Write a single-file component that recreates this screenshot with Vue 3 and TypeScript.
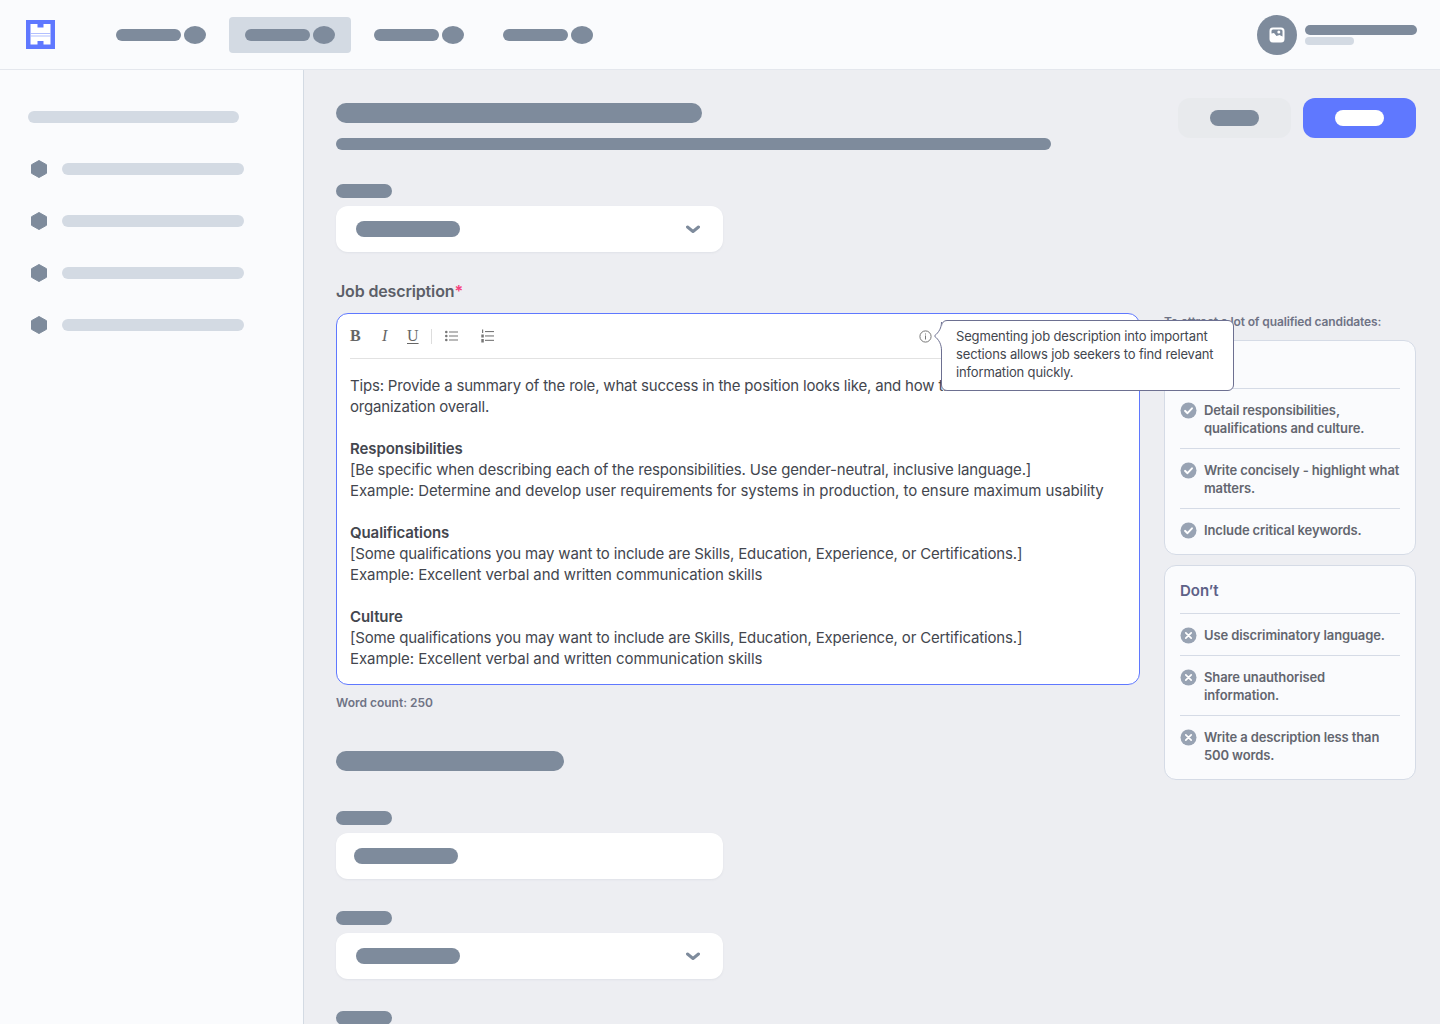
<script setup lang="ts">
const navItems = [false, true, false, false];
const sideItems = [1, 2, 3, 4];
const doItems = [
  ["Detail responsibilities,", "qualifications and culture."],
  ["Write concisely - highlight what", "matters."],
  ["Include critical keywords."],
];
const dontItems = [
  ["Use discriminatory language."],
  ["Share unauthorised", "information."],
  ["Write a description less than", "500 words."],
];
const sections = [
  {
    title: "Responsibilities",
    lines: [
      "[Be specific when describing each of the responsibilities. Use gender-neutral, inclusive language.]",
      "Example: Determine and develop user requirements for systems in production, to ensure maximum usability",
    ],
  },
  {
    title: "Qualifications",
    lines: [
      "[Some qualifications you may want to include are Skills, Education, Experience, or Certifications.]",
      "Example: Excellent verbal and written communication skills",
    ],
  },
  {
    title: "Culture",
    lines: [
      "[Some qualifications you may want to include are Skills, Education, Experience, or Certifications.]",
      "Example: Excellent verbal and written communication skills",
    ],
  },
];
</script>

<template>
  <div class="app">
    <header class="topbar">
      <svg class="logo" width="29" height="29" viewBox="0 0 29 29">
        <rect width="29" height="29" fill="#5f78ff" />
        <path d="M4.500 4h7v3.500h6V4h7v20.500h-7V21h-6v3.500h-7z" fill="#fff" />
        <rect x="4.500" y="13.200" width="20" height="0.800" fill="#9fb0ff" />
        <rect x="4.500" y="15.600" width="20" height="0.800" fill="#9fb0ff" />
      </svg>
      <nav class="nav">
        <div v-for="(active, i) in navItems" :key="i" class="nav-item" :class="{ active }">
          <span class="nav-pill"></span>
          <span class="nav-dot"></span>
        </div>
      </nav>
      <div class="user">
        <div class="avatar">
          <svg width="16" height="16" viewBox="0 0 16 16">
            <rect x="0.500" y="0.500" width="15" height="15" rx="3.500" fill="#fff" />
            <path d="M2.500 6.500V4A1.500 1.500 0 0 1 4 2.500h8A1.500 1.500 0 0 1 13.500 4v5.500l-3-1.500-3 1-2.500-3z" fill="#7e8b9c" />
            <circle cx="9.800" cy="5" r="1.500" fill="#fff" />
          </svg>
        </div>
        <div class="user-bars">
          <span class="user-name"></span>
          <span class="user-role"></span>
        </div>
      </div>
    </header>

    <div class="body">
      <aside class="sidebar">
        <span class="side-title"></span>
        <div v-for="n in sideItems" :key="n" class="side-item">
          <svg class="hex" width="16" height="18" viewBox="0 0 16 18">
            <path d="M8 .500 15.500 4.700v8.600L8 17.500.500 13.300V4.700z" fill="#7e8b9c" stroke="#7e8b9c" stroke-linejoin="round" />
          </svg>
          <span class="side-bar"></span>
        </div>
      </aside>

      <main class="main">
        <div class="page-head">
          <div class="head-bars">
            <span class="head-title"></span>
            <span class="head-sub"></span>
          </div>
          <div class="head-actions">
            <div class="btn btn-ghost"><span></span></div>
            <div class="btn btn-primary"><span></span></div>
          </div>
        </div>

        <div class="field first">
          <span class="label-bar"></span>
          <div class="select">
            <span class="value-bar"></span>
            <svg width="14" height="9" viewBox="0 0 14 9">
              <path d="M1.500 2 7 6.500 12.500 2" fill="none" stroke="#7e8b9c" stroke-width="3" stroke-linecap="round" stroke-linejoin="round" />
            </svg>
          </div>
        </div>

        <div class="form-row">
          <div class="form-col">
            <div class="job-label">Job description<span class="req">*</span></div>

            <div class="editor">
              <div class="toolbar">
                <span class="t-b">B</span>
                <span class="t-i">I</span>
                <span class="t-u">U</span>
                <span class="t-div"></span>
                <svg class="t-ul" width="13" height="12" viewBox="0 0 13 12">
                  <g fill="#777">
                    <circle cx="1.300" cy="2" r="1.300" />
                    <circle cx="1.300" cy="6" r="1.300" />
                    <circle cx="1.300" cy="10" r="1.300" />
                    <rect x="4" y="1.500" width="9" height="1" />
                    <rect x="4" y="5.500" width="9" height="1" />
                    <rect x="4" y="9.500" width="9" height="1" />
                  </g>
                </svg>
                <svg class="t-ol" width="13" height="14" viewBox="0 0 13 14">
                  <g fill="#777">
                    <rect x="1" y="0.500" width="1.200" height="3.500" />
                    <rect x="0.300" y="5.500" width="2.500" height="3" />
                    <rect x="0.300" y="10" width="2.500" height="3.500" />
                    <rect x="4" y="2" width="9" height="1.100" />
                    <rect x="4" y="6.400" width="9" height="1.100" />
                    <rect x="4" y="10.800" width="9" height="1.100" />
                  </g>
                </svg>
                <svg class="t-info" width="13" height="13" viewBox="0 0 13 13">
                  <circle cx="6.500" cy="6.500" r="5.600" fill="none" stroke="#777" stroke-width="1" />
                  <rect x="6" y="5.500" width="1" height="4" fill="#777" />
                  <rect x="6" y="3.500" width="1" height="1" fill="#777" />
                </svg>
              </div>
              <div class="editor-text">
                <p class="intro">Tips: Provide a summary of the role, what success in the position looks like, and how this role fits into the<br />organization overall.</p>
                <section v-for="s in sections" :key="s.title" class="ed-section">
                  <strong>{{ s.title }}</strong>
                  <div v-for="l in s.lines" :key="l" :class="{ bracket: l.startsWith('[') }">{{ l }}</div>
                </section>
              </div>

              <div class="tooltip">
                <svg class="tip-tail" width="9" height="32" viewBox="0 0 9 32">
                  <path d="M8.500 1C8.500 7 6 11 1.500 15 6 19 8.500 23 8.500 30L9 30V1z" fill="#fff" />
                  <path d="M8.500 1C8.500 7 6 11 1.500 15 6 19 8.500 23 8.500 30" fill="none" stroke="#6d7091" stroke-width="1" />
                </svg>
                Segmenting job description into important<br />sections allows job seekers to find relevant<br />information quickly.
              </div>
            </div>

            <div class="word-count">Word count: 250</div>
            <span class="section-bar"></span>

            <div class="field after-bar">
              <span class="label-bar"></span>
              <div class="select input">
                <span class="value-bar"></span>
              </div>
            </div>
            <div class="field">
              <span class="label-bar"></span>
              <div class="select">
                <span class="value-bar"></span>
                <svg width="14" height="9" viewBox="0 0 14 9">
                  <path d="M1.500 2 7 6.500 12.500 2" fill="none" stroke="#7e8b9c" stroke-width="3" stroke-linecap="round" stroke-linejoin="round" />
                </svg>
              </div>
            </div>
            <div class="field">
              <span class="label-bar"></span>
            </div>
          </div>

          <div class="guide">
            <div class="guide-title">To attract a lot of qualified candidates:</div>
            <div class="card">
              <div class="card-title">Do</div>
              <div v-for="item in doItems" :key="item[0]" class="card-row">
                <svg class="mark" width="17" height="17" viewBox="0 0 17 17">
                  <circle cx="8.500" cy="8.500" r="8" fill="#98a3b3" />
                  <path d="M5 8.800l2.500 2.400L12 6.300" fill="none" stroke="#fff" stroke-width="1.900" stroke-linecap="round" stroke-linejoin="round" />
                </svg>
                <div class="card-text"><div v-for="t in item" :key="t">{{ t }}</div></div>
              </div>
            </div>
            <div class="card">
              <div class="card-title">Don’t</div>
              <div v-for="item in dontItems" :key="item[0]" class="card-row">
                <svg class="mark" width="17" height="17" viewBox="0 0 17 17">
                  <circle cx="8.500" cy="8.500" r="8" fill="#98a3b3" />
                  <path d="M5.800 5.800l5.400 5.400M11.200 5.800l-5.400 5.400" fill="none" stroke="#fff" stroke-width="1.700" stroke-linecap="round" />
                </svg>
                <div class="card-text"><div v-for="t in item" :key="t">{{ t }}</div></div>
              </div>
            </div>
          </div>
        </div>
      </main>
    </div>
  </div>
</template>

<style scoped>
.app {
  height: 1024px;
  overflow: hidden;
  display: flex;
  flex-direction: column;
  font-family: Inter, "Liberation Sans", sans-serif;
  background: #edeef2;
}
span {
  display: block;
}
.topbar {
  height: 70px;
  box-sizing: border-box;
  flex: none;
  display: flex;
  align-items: center;
  padding: 0 23px 0 26px;
  background: #fafbfd;
  border-bottom: 1px solid #e4e7ed;
}
.logo {
  flex: none;
}
.nav {
  display: flex;
  gap: 7px;
  margin-left: 45px;
}
.nav-item {
  width: 122px;
  height: 36px;
  box-sizing: border-box;
  padding: 0 16px;
  display: flex;
  align-items: center;
  gap: 3px;
  border-radius: 4px;
}
.nav-item.active {
  background: #d3dae3;
}
.nav-pill {
  width: 65px;
  height: 12px;
  border-radius: 6px;
  background: #7e8b9c;
}
.nav-dot {
  width: 22px;
  height: 18px;
  border-radius: 50%;
  background: #7e8b9c;
}
.user {
  margin-left: auto;
  display: flex;
  align-items: center;
  gap: 8px;
}
.avatar {
  width: 40px;
  height: 40px;
  border-radius: 50%;
  background: #7e8b9c;
  display: flex;
  align-items: center;
  justify-content: center;
}
.user-bars {
  display: flex;
  flex-direction: column;
  gap: 2px;
}
.user-name {
  width: 112px;
  height: 10px;
  border-radius: 5px;
  background: #7e8b9c;
}
.user-role {
  width: 49px;
  height: 8px;
  border-radius: 4px;
  background: #d3dae3;
}
.body {
  flex: 1;
  display: flex;
  min-height: 0;
}
.sidebar {
  width: 304px;
  box-sizing: border-box;
  flex: none;
  background: #fafbfd;
  border-right: 1px solid #d3dae3;
  padding: 41px 0 0 28px;
}
.side-title {
  width: 211px;
  height: 12px;
  border-radius: 6px;
  background: #d3dae3;
  margin-bottom: 20px;
}
.side-item {
  display: flex;
  align-items: center;
  height: 52px;
  padding-left: 3px;
}
.hex {
  flex: none;
}
.side-bar {
  width: 182px;
  height: 12px;
  margin-left: 15px;
  border-radius: 6px;
  background: #d3dae3;
}
.main {
  flex: 1;
  min-width: 0;
  padding: 28px 24px 0 32px;
}
.page-head {
  display: flex;
  justify-content: space-between;
  align-items: flex-start;
}
.head-bars {
  padding-top: 5px;
  display: flex;
  flex-direction: column;
  gap: 15px;
}
.head-title {
  width: 366px;
  height: 20px;
  border-radius: 10px;
  background: #7e8b9c;
}
.head-sub {
  width: 715px;
  height: 12px;
  border-radius: 6px;
  background: #7e8b9c;
}
.head-actions {
  display: flex;
  gap: 12px;
}
.btn {
  width: 113px;
  height: 40px;
  border-radius: 12px;
  display: flex;
  align-items: center;
  justify-content: center;
}
.btn span {
  width: 49px;
  height: 16px;
  border-radius: 8px;
}
.btn-ghost {
  background: #e8eaed;
}
.btn-ghost span {
  background: #7e8b9c;
}
.btn-primary {
  background: #5f78ff;
}
.btn-primary span {
  background: #fff;
}
.field {
  margin-top: 32px;
}
.field.first {
  margin-top: 34px;
}
.field.after-bar {
  margin-top: 40px;
}
.label-bar {
  width: 56px;
  height: 14px;
  border-radius: 7px;
  background: #7e8b9c;
  margin-bottom: 8px;
}
.select {
  width: 387px;
  height: 46px;
  box-sizing: border-box;
  background: #fff;
  border-radius: 12px;
  padding: 0 23px 0 20px;
  display: flex;
  align-items: center;
  justify-content: space-between;
  box-shadow: 0 1px 2px rgba(130, 140, 160, 0.12);
}
.select.input {
  padding-left: 18px;
}
.value-bar {
  width: 104px;
  height: 16px;
  border-radius: 8px;
  background: #7e8b9c;
}
.form-row {
  display: flex;
  gap: 24px;
  align-items: flex-start;
}
.form-col {
  width: 804px;
  flex: none;
}
.job-label {
  margin-top: 28px;
  height: 22px;
  line-height: 22px;
  font-size: 16px;
  font-weight: 600;
  letter-spacing: -0.15px;
  color: #5c5f68;
}
.req {
  display: inline;
  color: #f5407c;
}
.editor {
  position: relative;
  z-index: 1;
  margin-top: 11px;
  height: 372px;
  box-sizing: border-box;
  background: #fff;
  border: 1px solid #5f78ff;
  border-radius: 12px;
  padding: 0 13px;
  color: #43464e;
}
.toolbar {
  height: 44px;
  display: flex;
  align-items: center;
  border-bottom: 1px solid #e2e2e2;
  color: #666;
  font-family: "Liberation Serif", serif;
  font-size: 16px;
}
.t-b {
  font-weight: 700;
  width: 11px;
}
.t-i {
  font-style: italic;
  margin-left: 21px;
  width: 6px;
}
.t-u {
  text-decoration: underline;
  text-underline-offset: 2px;
  text-decoration-thickness: 1px;
  margin-left: 19px;
  width: 12px;
}
.t-div {
  width: 1px;
  height: 15px;
  background: #ddd;
  margin-left: 12px;
}
.t-ul {
  margin-left: 13px;
}
.t-ol {
  margin-left: 23px;
}
.t-info {
  margin-left: auto;
  margin-right: 194px;
}
.editor-text {
  padding-top: 16px;
  font-size: 15px;
  line-height: 21px;
  letter-spacing: -0.08px;
}
.intro {
  margin: 0;
  white-space: nowrap;
  letter-spacing: -0.19px;
}
.bracket {
  letter-spacing: -0.16px;
}
.ed-section {
  margin-top: 21px;
  white-space: nowrap;
}
.ed-section strong {
  font-weight: 600;
}
.guide {
  flex: none;
  width: 252px;
  margin-top: 61px;
}
.guide-title {
  padding-top: 1px;
  font-size: 12px;
  font-weight: 600;
  color: #6f7385;
  line-height: 16px;
  height: 16px;
  letter-spacing: -0.12px;
  white-space: nowrap;
  margin-bottom: 10px;
}
.card {
  box-sizing: border-box;
  background: #fafbfd;
  border: 1px solid #d5dbe6;
  border-radius: 12px;
  padding: 0 15px 4px;
  margin-bottom: 10px;
}
.card-title {
  height: 47px;
  line-height: 50px;
  font-size: 15px;
  font-weight: 600;
  color: #5d6187;
}
.card-row {
  display: flex;
  align-items: flex-start;
  gap: 7px;
  border-top: 1px solid #d5dbe6;
  padding: 12px 0 11px;
  font-size: 13px;
  font-weight: 600;
  letter-spacing: -0.12px;
  line-height: 18px;
  color: #63666f;
}
.mark {
  flex: none;
  margin-top: 1px;
}
.card-text {
  white-space: nowrap;
}
.tooltip {
  position: absolute;
  left: 604px;
  top: 6px;
  width: 293px;
  height: 71px;
  box-sizing: border-box;
  padding: 6px 14px;
  background: #fff;
  border: 1px solid #6d7091;
  border-radius: 6px;
  font-size: 13px;
  line-height: 18px;
  letter-spacing: -0.15px;
  color: #43464e;
  white-space: nowrap;
}
.tip-tail {
  position: absolute;
  left: -9px;
  top: 0;
}
.word-count {
  margin-top: 10px;
  height: 16px;
  line-height: 16px;
  font-size: 12px;
  font-weight: 600;
  color: #6f7385;
}
.section-bar {
  width: 228px;
  height: 20px;
  border-radius: 10px;
  background: #7e8b9c;
  margin-top: 40px;
}
</style>

<style>
html,
body {
  margin: 0;
  background: #edeef2;
}
</style>
